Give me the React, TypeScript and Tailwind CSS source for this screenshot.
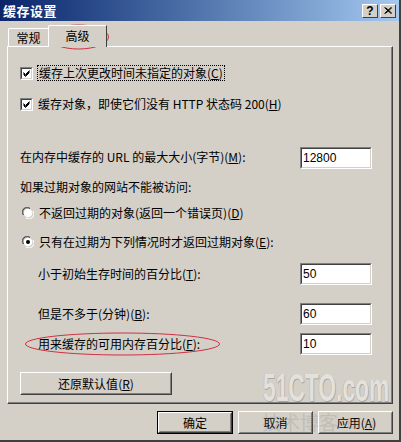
import React from "react";

const CJK = "font-['SimSun','Noto_Sans_CJK_SC',sans-serif]";

function Sunken({ children, className = "" }: { children?: React.ReactNode; className?: string }) {
  return (
    <div className={"border border-t-[#808080] border-l-[#808080] border-b-white border-r-white " + className}>
      <div className="w-full h-full border border-t-[#404040] border-l-[#404040] border-b-[#d4d0c8] border-r-[#d4d0c8] bg-white">
        {children}
      </div>
    </div>
  );
}

function Field({ value }: { value: string }) {
  return (
    <Sunken className="w-[72px] h-[22px] shrink-0">
      <div className="pl-[1px] pt-[2px] text-[12px] leading-[14px] text-black font-['Liberation_Sans',sans-serif]">{value}</div>
    </Sunken>
  );
}

function Check() {
  return (
    <Sunken className="w-[13px] h-[13px] shrink-0">
      <svg width="11" height="11" viewBox="0 0 11 11" className="block -mt-[1px] -ml-[1px]">
        <path d="M2.5 4.5 L4.5 6.5 L8.5 2.5 M2.5 5.5 L4.5 7.5 L8.5 3.5 M2.5 6.5 L4.5 8.5 L8.5 4.5" stroke="#000" strokeWidth="1" fill="none" />
      </svg>
    </Sunken>
  );
}

function Radio({ checked }: { checked?: boolean }) {
  return (
    <svg width="12" height="12" viewBox="0 0 12 12" className="shrink-0 block">
      <path d="M1 8 A5 5 0 0 1 8 1" stroke="#808080" strokeWidth="1" fill="none" />
      <path d="M2 8 A4 4 0 0 1 8 2" stroke="#404040" strokeWidth="1" fill="none" />
      <circle cx="6" cy="6" r="4.3" fill="#fff" />
      <path d="M11 4 A5 5 0 0 1 4 11" stroke="#fff" strokeWidth="1" fill="none" />
      {checked && <circle cx="6" cy="6" r="2" fill="#000" />}
    </svg>
  );
}

function Acc({ k }: { k: string }) {
  return (
    <span>
      (<span className="underline">{k}</span>)
    </span>
  );
}

function Btn({ children, def, className = "" }: { children: React.ReactNode; def?: boolean; className?: string }) {
  const inner = (
    <div className="w-full h-full border border-t-white border-l-white border-b-[#404040] border-r-[#404040]">
      <div className="w-full h-full border border-t-[#d4d0c8] border-l-[#d4d0c8] border-b-[#808080] border-r-[#808080] flex items-center justify-center text-[12px] text-black">
        {children}
      </div>
    </div>
  );
  if (def) {
    return <div className={"border border-black " + className}>{inner}</div>;
  }
  return <div className={className}>{inner}</div>;
}

export default function App() {
  return (
    <div className={"relative w-[401px] h-[442px] bg-[#d4d0c8] overflow-hidden text-black " + CJK}>
      <div className="absolute inset-0 border-r-2 border-b-2 border-r-[#404040] border-b-[#404040] pointer-events-none" />
      {/* title bar */}
      <div className="h-[21px] flex items-center justify-between bg-gradient-to-r from-[#0a246a] to-[#a6caf0] pl-[3px] pr-[5px]">
        <span className="text-white font-bold text-[13px] leading-[15px] tracking-[0.5px]">缓存设置</span>
        <div className="flex gap-[2px]">
          <div className="w-[16px] h-[14px] bg-[#d4d0c8] border border-t-white border-l-white border-b-[#404040] border-r-[#404040] flex items-center justify-center text-[12px] font-bold font-['Liberation_Sans',sans-serif] leading-none">?</div>
          <div className="w-[16px] h-[14px] bg-[#d4d0c8] border border-t-white border-l-white border-b-[#404040] border-r-[#404040] flex items-center justify-center">
            <svg width="8" height="7" viewBox="0 0 8 7">
              <path d="M0.5 0.5 L7 6.5 M1.5 0.5 L8 6.5 M7 0.5 L0.5 6.5 M8 0.5 L1.5 6.5" stroke="#000" strokeWidth="1" />
            </svg>
          </div>
        </div>
      </div>

      {/* tabs */}
      <div className="ml-[7px] mt-[4px] h-[21px] flex items-end relative z-10">
        <div className="h-[18px] w-[41px] ml-[1px] border-t border-l border-white border-r border-r-[#404040] rounded-tl-[2px] flex items-center justify-center text-[12px] leading-none pt-[1px]">
          常规
        </div>
        <div className="h-[22px] w-[59px] -ml-[1px] -mb-[1px] bg-[#d4d0c8] border-t border-l border-white border-r border-r-[#404040] rounded-tl-[2px] flex items-start justify-center pt-[4px] text-[12px] leading-none">
          高级
        </div>
      </div>

      {/* panel */}
      <div className="ml-[7px] w-[386px] h-[358px] border border-t-white border-l-white border-r-[#404040] border-b-[#404040] text-[12px] leading-[14px]">
        <div className="w-full h-full border-r border-b border-r-[#808080] border-b-[#808080] pl-[12px] pr-[19px] flex flex-col">
          <div className="mt-[17px] h-[18px] flex items-center gap-[5px]">
            <Check />
            <span className="border border-dotted border-black px-[1px] -ml-[1px]">
              缓存上次更改时间未指定的对象<Acc k="C" />
            </span>
          </div>
          <div className="mt-[13px] h-[18px] flex items-center gap-[5px]">
            <Check />
            <span>
              缓存对象，即使它们没有 HTTP 状态码 200<Acc k="H" />
            </span>
          </div>
          <div className="mt-[34px] h-[22px] flex items-center justify-between">
            <span className="-mt-[3px]">
              在内存中缓存的 URL 的最大大小(字节)<Acc k="M" />:
            </span>
            <Field value="12800" />
          </div>
          <div className="mt-[9px] h-[18px] flex items-center">如果过期对象的网站不能被访问:</div>
          <div className="mt-[8px] h-[18px] flex items-center gap-[5px] pl-[2px]">
            <Radio />
            <span>
              不返回过期的对象(返回一个错误页)<Acc k="D" />
            </span>
          </div>
          <div className="mt-[11px] h-[18px] flex items-center gap-[5px] pl-[2px]">
            <Radio checked />
            <span>
              只有在过期为下列情况时才返回过期对象<Acc k="E" />:
            </span>
          </div>
          <div className="mt-[12px] h-[22px] flex items-center justify-between pl-[18px]">
            <span>
              小于初始生存时间的百分比<Acc k="T" />:
            </span>
            <Field value="50" />
          </div>
          <div className="mt-[18px] h-[22px] flex items-center justify-between pl-[18px]">
            <span>
              但是不多于(分钟)<Acc k="B" />:
            </span>
            <Field value="60" />
          </div>
          <div className="mt-[8px] h-[22px] flex items-center justify-between pl-[18px]">
            <span>
              用来缓存的可用内存百分比<Acc k="F" />:
            </span>
            <Field value="10" />
          </div>
          <div className="mt-[17px] h-[23px] flex">
            <Btn className="w-[152px] h-[23px]">
              还原默认值<Acc k="R" />
            </Btn>
          </div>
        </div>
      </div>

      {/* bottom buttons */}
      <div className="mt-[7px] h-[23px] flex justify-end gap-[5px] pr-[8px]">
        <Btn def className="w-[76px] h-[23px]">确定</Btn>
        <Btn className="w-[75px] h-[23px]">取消</Btn>
        <Btn className="w-[75px] h-[23px]">
          <span className="ml-[2px]">应用<Acc k="A" /></span>
        </Btn>
      </div>

      {/* watermark */}
      <div className="absolute left-[263px] top-[369px] pointer-events-none">
        <span className="inline-block origin-left scale-x-[0.6] whitespace-nowrap text-[38px] leading-[38px] font-bold text-[#e4e1dc] font-['Liberation_Sans',sans-serif] [text-shadow:1px_1px_0_#aaa69e,-1px_0_0_#bdb9b1]">
          51CTO.com
        </span>
      </div>
      <div className="absolute left-[262px] top-[411px] text-[19px] leading-[22px] text-[#8a867e] opacity-25 pointer-events-none flex items-end gap-[8px] whitespace-nowrap">
        <span>技术博客</span>
        <span className="text-[15px] font-['Liberation_Serif',serif] -mb-[1px]">Blog</span>
      </div>

      {/* red ellipses */}
      <svg className="absolute left-0 top-0 pointer-events-none" width="401" height="442">
        <ellipse cx="78.5" cy="37" rx="30" ry="12" fill="none" stroke="#d03040" strokeWidth="1" />
        <ellipse cx="122.5" cy="344" rx="97" ry="11" fill="none" stroke="#d03040" strokeWidth="1" />
      </svg>
    </div>
  );
}
